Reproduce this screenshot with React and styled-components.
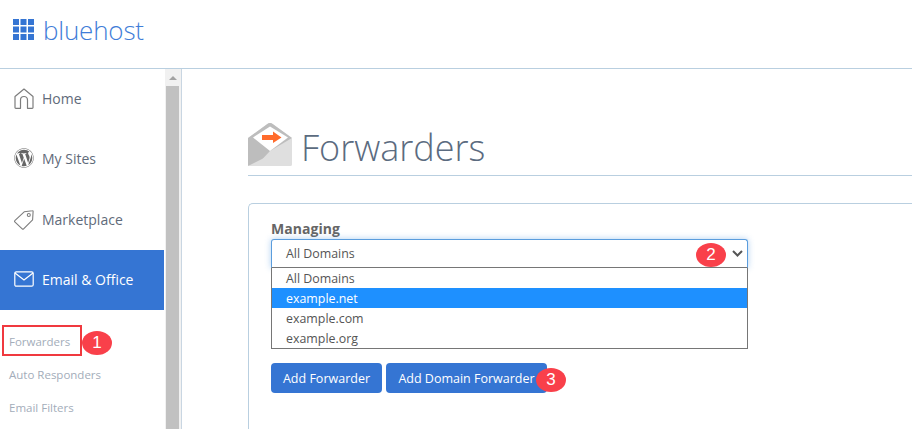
import React from 'react';
import styled, { createGlobalStyle } from 'styled-components';
import { FaWordpress } from 'react-icons/fa';

const GlobalStyle = createGlobalStyle`
  html, body {
    margin: 0;
    padding: 0;
    background: #fff;
    overflow: hidden;
  }
  * {
    box-sizing: border-box;
  }
`;

const Page = styled.div`
  width: 912px;
  height: 429px;
  overflow: hidden;
  font-family: "Open Sans", sans-serif;
  display: flex;
  flex-direction: column;
`;

const Header = styled.header`
  height: 69px;
  flex: none;
  border-bottom: 1px solid #b9cfe0;
  display: flex;
  align-items: center;
  padding: 0 0 9px 13px;
  gap: 9px;
`;

const LogoText = styled.span`
  font-size: 26px;
  font-weight: 300;
  color: #3f7dd8;
  letter-spacing: -0.2px;
`;

const Body = styled.div`
  flex: 1;
  display: flex;
  min-height: 0;
`;

const Sidebar = styled.aside`
  width: 182px;
  flex: none;
  display: flex;
  border-right: 1px solid #c9d6e2;
`;

const Menu = styled.nav`
  width: 164px;
  flex: none;
  display: flex;
  flex-direction: column;
`;

const NavItem = styled.div`
  height: ${(p) => p.$height || 60}px;
  flex: none;
  display: flex;
  align-items: center;
  gap: 8px;
  padding: 0 0 ${(p) => (p.$height ? 0 : 2)}px 14px;
  font-size: 14px;
  color: ${(p) => (p.$active ? '#fff' : '#5f6b7a')};
  background: ${(p) => (p.$active ? '#3575d3' : 'transparent')};
  font-weight: ${(p) => (p.$active ? 500 : 400)};
`;

const SubMenu = styled.div`
  display: flex;
  flex-direction: column;
  padding: 15px 0 0 2px;
`;

const SubItem = styled.div`
  position: relative;
  height: 33px;
  display: flex;
  align-items: center;
  padding-left: 7px;
  font-size: 11.5px;
  color: #a3adba;
`;

const Highlight = styled.div`
  position: absolute;
  left: 0;
  top: 0;
  width: 80px;
  height: 31px;
  border: 2px solid #f0393f;
`;

const Scrollbar = styled.div`
  width: 16px;
  flex: none;
  background: #f1f1f1;
  margin-left: 1px;
  display: flex;
  flex-direction: column;
`;

const ScrollArrow = styled.div`
  height: 17px;
  flex: none;
  display: flex;
  align-items: center;
  justify-content: center;
  &::before {
    content: '';
    border-left: 4px solid transparent;
    border-right: 4px solid transparent;
    border-bottom: 4px solid #a3a3a3;
  }
`;

const ScrollThumb = styled.div`
  width: 13px;
  margin-left: 1px;
  flex: 1;
  background: #c1c1c1;
`;

const Main = styled.main`
  flex: 1;
  min-width: 0;
  padding: 54px 0 0 66px;
  display: flex;
  flex-direction: column;
`;

const TitleRow = styled.div`
  height: 53px;
  flex: none;
  display: flex;
  align-items: center;
  gap: 9px;
  border-bottom: 1px solid #b9cfe0;
  padding-bottom: 9px;
`;

const Title = styled.h1`
  margin: 6px 0 0;
  font-size: 36px;
  font-weight: 300;
  color: #5b6b80;
  line-height: 44px;
`;

const Card = styled.section`
  margin-top: 27px;
  flex: 1;
  border: 1px solid #b9cfe0;
  border-right: none;
  border-bottom: none;
  border-radius: 5px 0 0 0;
  padding: 15px 0 0 22px;
`;

const Label = styled.div`
  font-size: 14px;
  font-weight: 700;
  color: #666;
  line-height: 20px;
  letter-spacing: 0.05px;
`;

const SelectWrap = styled.div`
  position: relative;
  width: 477px;
`;

const SelectBox = styled.div`
  height: 29px;
  border: 1px solid #5b9ddd;
  border-bottom: 1px solid #767676;
  border-radius: 3px 3px 0 0;
  box-shadow: 0 0 6px rgba(80, 150, 225, 0.45);
  display: flex;
  align-items: center;
  justify-content: space-between;
  padding: 0 4px 0 14px;
  font-size: 12.4px;
  color: #555;
`;

const OptionList = styled.div`
  position: relative;
  border: 1px solid #767676;
  border-top: none;
  background: #fff;
`;

const Option = styled.div`
  height: 20px;
  display: flex;
  align-items: center;
  padding-left: 14px;
  font-size: 12.4px;
  color: ${(p) => (p.$selected ? '#fff' : '#555')};
  background: ${(p) => (p.$selected ? '#1e90ff' : 'transparent')};
`;

const ButtonRow = styled.div`
  display: flex;
  gap: 4px;
  margin-top: 14px;
`;

const Button = styled.button`
  position: relative;
  height: 30px;
  width: ${(p) => p.$width}px;
  border: none;
  border-radius: 4px;
  background: #3575d3;
  color: #fff;
  font-family: inherit;
  font-size: 12.5px;
  font-weight: 500;
  padding: 0;
`;

const Badge = styled.span`
  position: absolute;
  width: 30px;
  height: 24px;
  border-radius: 50%;
  background: #f9404a;
  color: #fff;
  font-family: "Liberation Sans", Arial, sans-serif;
  font-size: 17px;
  font-weight: 400;
  display: flex;
  align-items: center;
  justify-content: center;
  left: ${(p) => p.$left}px;
  top: ${(p) => p.$top}px;
`;

const LogoGrid = () => (
  <svg width="21" height="21" viewBox="0 0 21 21" fill="#3575d3">
    {[0, 7.5, 15].map((y) =>
      [0, 7.5, 15].map((x) => <rect key={`${x}-${y}`} x={x} y={y} width="6" height="6" />)
    )}
  </svg>
);

const HomeIcon = () => (
  <svg width="20" height="21" viewBox="0 0 20 21" fill="none" stroke="#7d7d7d" strokeWidth="1.2">
    <path d="M1 8.5 10 1 19 8.5V19.5a.8.8 0 0 1-.8.8H13.5V12a3.5 3.5 0 0 0-7 0V20.3H1.8a.8.8 0 0 1-.8-.8Z" strokeLinejoin="round" />
  </svg>
);

const WpIcon = styled(FaWordpress)`
  width: 20px;
  height: 20px;
  color: #666;
  flex: none;
`;

const TagIcon = () => (
  <svg width="20" height="20" viewBox="0 0 20 20" fill="none" stroke="#7d7d7d" strokeWidth="1.1">
    <path d="M.8 10.6 10.2 1.8 18.4.8a.6.6 0 0 1 .7.7L18.6 9.8 9.6 18.8a1 1 0 0 1-1.4 0L.8 11.8a.8.8 0 0 1 0-1.2Z" strokeLinejoin="round" />
    <circle cx="14.8" cy="5" r="1.5" />
  </svg>
);

const MailIcon = () => (
  <svg width="20" height="16" viewBox="0 0 20 16" fill="none" stroke="#fff" strokeWidth="1.2">
    <rect x="0.8" y="0.8" width="18.4" height="14.4" rx="1.5" />
    <path d="M1 2 10 9 19 2" />
  </svg>
);

const ForwardIcon = () => (
  <svg width="44" height="43" viewBox="0 0 44 43">
    <path d="M0 15 19 1.2a5 5 0 0 1 6 0L44 15V41a2 2 0 0 1-2 2H2a2 2 0 0 1-2-2Z" fill="#dfdfdf" />
    <path d="M0 15 19 1.2a5 5 0 0 1 6 0L44 15 22 32 0 43Z" fill="#bdbdbd" />
    <path d="M44 15 22 28 8 43H42a2 2 0 0 0 2-2Z" fill="#dfdfdf" />
    <path d="M5 14.5 22 3.5 40 14.5 22 28Z" fill="#fff" />
    <path d="M14 12H25V8.5L33.5 14.5 25 20V17H14Z" fill="#ff6b2c" />
  </svg>
);

const Chevron = () => (
  <svg width="11" height="7" viewBox="0 0 11 7" fill="none" stroke="#555" strokeWidth="2">
    <path d="M1 1 5.5 5.5 10 1" />
  </svg>
);

export default function App() {
  return (
    <Page>
      <GlobalStyle />
      <Header>
        <LogoGrid />
        <LogoText>bluehost</LogoText>
      </Header>
      <Body>
        <Sidebar>
          <Menu>
            <NavItem>
              <HomeIcon />
              Home
            </NavItem>
            <NavItem>
              <WpIcon />
              My Sites
            </NavItem>
            <NavItem $height={61}>
              <TagIcon />
              Marketplace
            </NavItem>
            <NavItem $active>
              <MailIcon />
              Email &amp; Office
            </NavItem>
            <SubMenu>
              <SubItem>
                Forwarders
                <Highlight />
                <Badge $left={80} $top={6}>1</Badge>
              </SubItem>
              <SubItem>Auto Responders</SubItem>
              <SubItem>Email Filters</SubItem>
            </SubMenu>
          </Menu>
          <Scrollbar>
            <ScrollArrow />
            <ScrollThumb />
          </Scrollbar>
        </Sidebar>
        <Main>
          <TitleRow>
            <ForwardIcon />
            <Title>Forwarders</Title>
          </TitleRow>
          <Card>
            <Label>Managing</Label>
            <SelectWrap>
              <SelectBox>
                All Domains
                <Chevron />
              </SelectBox>
              <Badge $left={425} $top={4}>2</Badge>
              <OptionList>
                <Option>All Domains</Option>
                <Option $selected>example.net</Option>
                <Option>example.com</Option>
                <Option>example.org</Option>
              </OptionList>
            </SelectWrap>
            <ButtonRow>
              <Button $width={111}>Add Forwarder</Button>
              <Button $width={161}>
                Add Domain Forwarder
                <Badge $left={150} $top={5}>3</Badge>
              </Button>
            </ButtonRow>
          </Card>
        </Main>
      </Body>
    </Page>
  );
}
